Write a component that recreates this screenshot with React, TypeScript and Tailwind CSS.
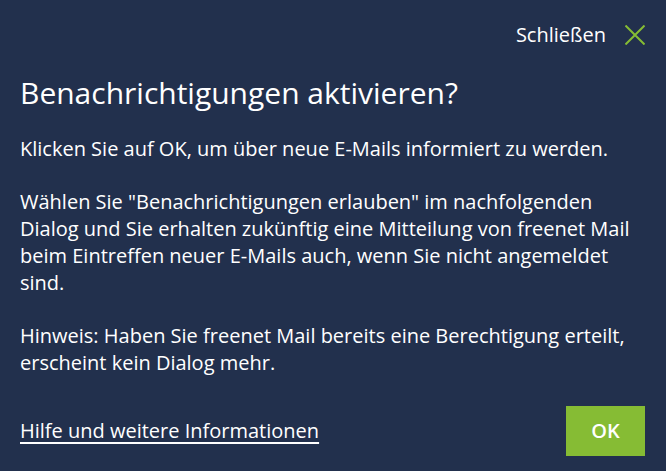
export default function App() {
  return (
    <div className="w-[666px] h-[471px] bg-[#22304d] text-white font-['Open_Sans',sans-serif] flex flex-col px-5">
      <div className="flex justify-end items-center pt-[20px] h-[50px]">
        <button className="flex items-center gap-[19px] text-[20px] text-white mr-[1px]">
          Schließen
          <svg width="20" height="20" viewBox="0 0 20 20" className="stroke-[#86bc34]" strokeWidth="2">
            <path d="M0.5 0.5 L19.5 19.5 M19.5 0.5 L0.5 19.5" fill="none" />
          </svg>
        </button>
      </div>
      <h1 className="text-[30px] leading-[38px] mt-[24px]">Benachrichtigungen aktivieren?</h1>
      <div className="text-[20px] leading-[26.7px] mt-[24px] flex flex-col gap-[26.7px]">
        <p>Klicken Sie auf OK, um über neue E-Mails informiert zu werden.</p>
        <p>
          Wählen Sie "Benachrichtigungen erlauben" im nachfolgenden Dialog und Sie erhalten zukünftig eine
          Mitteilung von freenet Mail beim Eintreffen neuer E-Mails auch, wenn Sie nicht angemeldet sind.
        </p>
        <p>
          Hinweis: Haben Sie freenet Mail bereits eine Berechtigung erteilt, erscheint kein Dialog mehr.
        </p>
      </div>
      <div className="flex justify-between items-center mt-auto mb-[15px]">
        <a href="#" className="text-[20px] underline underline-offset-[4px]">Hilfe und weitere Informationen</a>
        <button className="bg-[#86bc34] w-[79px] h-[50px] mr-[1px] text-[20px] font-semibold">OK</button>
      </div>
    </div>
  );
}
